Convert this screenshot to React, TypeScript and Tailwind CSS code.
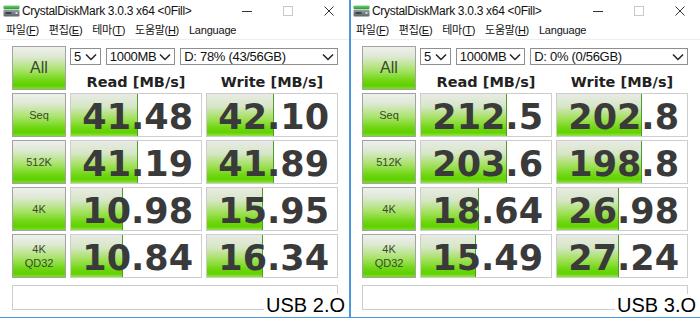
import React from "react";

type Row = { label: string[]; read: string; write: string; rb: number; wb: number };

const ui = { fontFamily: '"Liberation Sans", "Noto Sans CJK KR", Arial, sans-serif' };
const num = { fontFamily: '"DejaVu Sans", Verdana, sans-serif' };

function Chevron() {
  return (
    <svg width="12" height="8" viewBox="0 0 12 8" className="shrink-0">
      <polyline points="1,1.5 6,6.5 11,1.5" fill="none" stroke="#222" strokeWidth="1.5" />
    </svg>
  );
}

function Drop({ text, w }: { text: string; w: string }) {
  return (
    <div
      className={`${w} h-[17px] border border-[#8f8f8f] bg-white flex items-center justify-between pl-[3px] pr-[3px] text-[13px] text-[#111] leading-none tracking-[-0.3px]`}
      style={ui}
    >
      <span>{text}</span>
      <Chevron />
    </div>
  );
}

function AppIcon() {
  return (
    <svg width="17" height="12" viewBox="0 0 17 12" className="shrink-0">
      <defs>
        <linearGradient id="gbar" x1="0" y1="0" x2="0" y2="1">
          <stop offset="0" stopColor="#6fd86a" />
          <stop offset="1" stopColor="#1f9a3a" />
        </linearGradient>
        <linearGradient id="gbody" x1="0" y1="0" x2="0" y2="1">
          <stop offset="0" stopColor="#9aa0a6" />
          <stop offset="1" stopColor="#5d6369" />
        </linearGradient>
      </defs>
      <rect x="0.5" y="0.5" width="16" height="3.5" rx="0.8" fill="url(#gbar)" />
      <rect x="0.5" y="4.5" width="16" height="7" rx="1" fill="url(#gbody)" />
      <rect x="2.5" y="7" width="6" height="2" fill="#3e4347" />
      <circle cx="13.5" cy="8" r="1.1" fill="#d8f0d8" />
    </svg>
  );
}

function LabelBtn({ lines, big }: { lines: string[]; big?: boolean }) {
  return (
    <div
      className="border border-[#a3a3a3] bg-[linear-gradient(to_bottom,#eef0ec_0%,#dfe9d6_22%,#a9e36a_55%,#6fd612_80%,#5fd000_92%,#7fdc2a_100%)] flex flex-col items-center justify-center text-[#3a4832]"
      style={ui}
    >
      {lines.map((l) => (
        <span key={l} className={big ? "text-[16px] leading-[16px]" : "text-[11px] leading-[14px]"}>
          {l}
        </span>
      ))}
    </div>
  );
}

function Cell({ value, bar }: { value: string; bar: number }) {
  return (
    <div className="relative border border-[#cdcdcd] bg-white overflow-hidden">
      <div
        className="absolute left-0 top-0 bottom-0 border-r border-[#4e9a2a] bg-[linear-gradient(to_bottom,#e8ebe5_0%,#d6e6c6_30%,#9fe055_60%,#6cd60e_82%,#62d200_92%,#95e250_100%)]"
        style={{ width: bar }}
      />
      <div className="relative h-full flex items-center justify-end pt-[4px] pr-[8px]">
        <span className="text-[35px] leading-[35px] font-bold text-[#3a3a3a]" style={num}>
          {value}
        </span>
      </div>
    </div>
  );
}

function Window({
  drive,
  rows,
  usb,
  first,
}: {
  drive: string;
  rows: Row[];
  usb: string;
  first: boolean;
}) {
  const menu = [
    ["파일", "F"],
    ["편집", "E"],
    ["테마", "T"],
    ["도움말", "H"],
  ];
  return (
    <div
      className={`relative h-[318px] w-[350px] shrink-0 bg-white border-b border-[#4a98e0] ${
        first ? "border-r" : "border-l"
      } border-[#4a98e0] flex flex-col`}
    >
      {/* title bar */}
      <div className={`h-[22px] flex items-center ${first ? "pl-[3px]" : "pl-[2px]"}`}>
        <AppIcon />
        <span className="ml-[2px] text-[12px] text-[#111] tracking-[-0.3px]" style={ui}>
          CrystalDiskMark 3.0.3 x64 &lt;0Fill&gt;
        </span>
        <div className="ml-auto flex h-full">
          <div className="w-[41px] h-full flex items-center justify-center">
            <svg width="10" height="10" viewBox="0 0 10 10">
              <line x1="0" y1="5.5" x2="10" y2="5.5" stroke="#333" strokeWidth="1" />
            </svg>
          </div>
          <div className="w-[41px] h-full flex items-center justify-center">
            <svg width="10" height="10" viewBox="0 0 10 10">
              <rect x="0.5" y="0.5" width="9" height="9" fill="none" stroke="#c8c8c8" strokeWidth="1" />
            </svg>
          </div>
          <div className="w-[41px] h-full flex items-center justify-center">
            <svg width="10" height="10" viewBox="0 0 10 10">
              <line x1="0.5" y1="0.5" x2="9.5" y2="9.5" stroke="#333" strokeWidth="1" />
              <line x1="9.5" y1="0.5" x2="0.5" y2="9.5" stroke="#333" strokeWidth="1" />
            </svg>
          </div>
        </div>
      </div>
      {/* menu bar */}
      <div
        className={`h-[18px] flex items-center gap-[10px] ${first ? "pl-[6px]" : "pl-[5px]"} border-b border-[#eeeeee] text-[11px] text-[#111] leading-none`}
        style={ui}
      >
        {menu.map(([k, m]) => (
          <span key={k} className="tracking-[-0.3px]">
            {k}(<span className="underline">{m}</span>)
          </span>
        ))}
        <span className="tracking-[-0.2px]">Language</span>
      </div>
      {/* client */}
      <div className={`flex flex-col pt-[6px] ${first ? "pl-[12px]" : "pl-[11px]"}`}>
        <div className="grid grid-cols-[54px_132px_132px] grid-rows-[44px_44px_44px_44px_44px] gap-x-[4px] gap-y-[3px]">
          <LabelBtn lines={["All"]} big />
          <div className="col-span-2 flex flex-col">
            <div className="mt-[2px] flex gap-[5px]">
              <Drop text="5" w="w-[31px]" />
              <Drop text="1000MB" w="w-[70px]" />
              <Drop text={drive} w="w-[159px]" />
            </div>
            <div className="grid grid-cols-[132px_132px] gap-x-[4px] pt-[10px]">
              <span className="text-center text-[14.5px] leading-[14.5px] font-bold text-[#222]" style={num}>
                Read [MB/s]
              </span>
              <span className="text-center text-[14.5px] leading-[14.5px] font-bold text-[#222]" style={num}>
                Write [MB/s]
              </span>
            </div>
          </div>
          {rows.map((r) => (
            <React.Fragment key={r.label.join("")}>
              <LabelBtn lines={r.label} />
              <Cell value={r.read} bar={r.rb} />
              <Cell value={r.write} bar={r.wb} />
            </React.Fragment>
          ))}
        </div>
        <div className="mt-[7px] w-[326px] h-[25px] border border-[#cdcdcd] bg-white" />
      </div>
      <div
        className="absolute bottom-[1px] right-[2px] bg-white px-[2px] text-[20px] leading-[22px] text-black"
        style={ui}
      >
        {usb}
      </div>
    </div>
  );
}

export default function App() {
  const left: Row[] = [
    { label: ["Seq"], read: "41.48", write: "42.10", rb: 67, wb: 67 },
    { label: ["512K"], read: "41.19", write: "41.89", rb: 67, wb: 67 },
    { label: ["4K"], read: "10.98", write: "15.95", rb: 52, wb: 56 },
    { label: ["4K", "QD32"], read: "10.84", write: "16.34", rb: 52, wb: 56 },
  ];
  const right: Row[] = [
    { label: ["Seq"], read: "212.5", write: "202.8", rb: 86, wb: 85 },
    { label: ["512K"], read: "203.6", write: "198.8", rb: 86, wb: 85 },
    { label: ["4K"], read: "18.64", write: "26.98", rb: 58, wb: 62 },
    { label: ["4K", "QD32"], read: "15.49", write: "27.24", rb: 55, wb: 62 },
  ];
  return (
    <div className="w-[700px] h-[321px] bg-white flex overflow-hidden">
      <Window drive="D: 78% (43/56GB)" rows={left} usb="USB 2.O" first />
      <Window drive="D: 0% (0/56GB)" rows={right} usb="USB 3.O" first={false} />
    </div>
  );
}
